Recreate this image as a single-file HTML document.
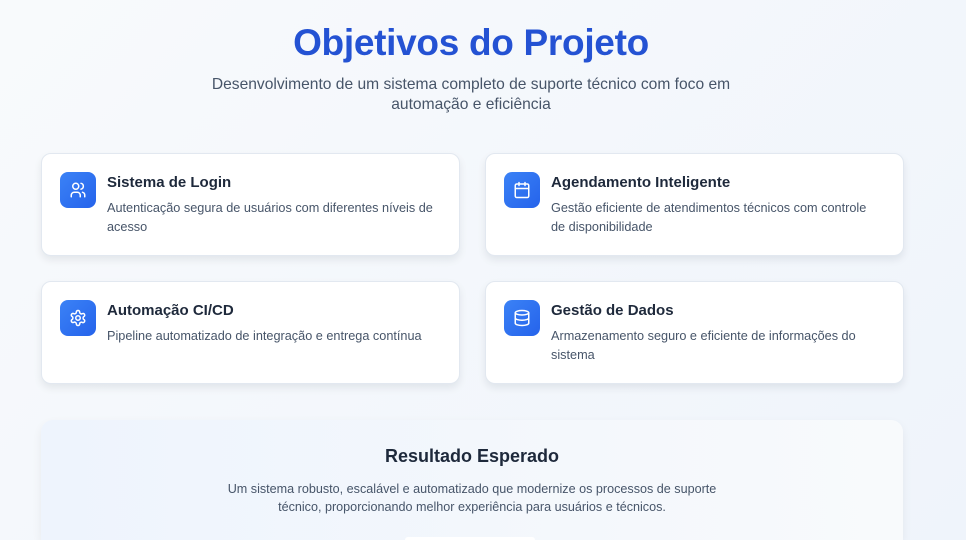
<!DOCTYPE html>
<html style="height:540px;overflow:hidden"><head><meta charset="utf-8"><style>
*{margin:0;padding:0;box-sizing:border-box}
body{width:966px;height:540px;overflow:hidden;background:linear-gradient(135deg,#f8fafc,#eff4fb);font-family:"Liberation Sans",sans-serif;position:relative}
h1{position:absolute;top:22px;left:0;width:942px;text-align:center;font-size:37px;font-weight:700;color:#2452d3;letter-spacing:-0.3px}
.sub{position:absolute;top:75px;left:180px;width:582px;text-align:center;font-size:15.6px;line-height:20px;color:#475569}
.card{position:absolute;width:419px;height:103px;background:#fff;border:1px solid #e2e8f0;border-radius:10px;box-shadow:0 4px 8px rgba(15,23,42,.08)}
.ic{position:absolute;left:18px;top:18px;width:36px;height:36px;border-radius:8px;background:linear-gradient(135deg,#3b82f6,#2563eb);display:flex;align-items:center;justify-content:center}
.t{position:absolute;left:65px;top:20px;font-size:15px;font-weight:700;color:#1e293b}
.d{position:absolute;left:65px;top:45px;width:334px;font-size:12.7px;line-height:19px;color:#475569}
.res{position:absolute;left:41px;top:420px;width:862px;height:120px;border-radius:12px 12px 0 0;background:linear-gradient(90deg,#eef4fd,#f8fafc);box-shadow:0 4px 10px rgba(15,23,42,.06)}
.res h2{position:absolute;top:26px;width:100%;text-align:center;font-size:18px;font-weight:700;color:#1e293b}
.res p{position:absolute;top:60px;left:170px;width:522px;text-align:center;font-size:12.6px;line-height:18px;color:#475569}
.pill{position:absolute;left:405px;top:537px;width:130px;height:3px;background:#fff;border-radius:6px 6px 0 0}
</style></head><body>
<h1>Objetivos do Projeto</h1>
<div class="sub">Desenvolvimento de um sistema completo de suporte técnico com foco em automação e eficiência</div>

<div class="card" style="left:41px;top:153px"><div class="ic"><svg width="18" height="18" viewBox="0 0 24 24" fill="none" stroke="#fff" stroke-width="2" stroke-linecap="round"><circle cx="9" cy="7" r="4"/><path d="M3 21v-2a4 4 0 0 1 4-4h4a4 4 0 0 1 4 4v2M16 3.1a4 4 0 0 1 0 7.8M21 21v-2a4 4 0 0 0-3-3.9"/></svg></div><div class="t">Sistema de Login</div><div class="d">Autenticação segura de usuários com diferentes níveis de acesso</div></div>

<div class="card" style="left:485px;top:153px"><div class="ic"><svg width="18" height="18" viewBox="0 0 24 24" fill="none" stroke="#fff" stroke-width="2" stroke-linecap="round"><rect x="3" y="4" width="18" height="18" rx="2"/><path d="M16 2v4M8 2v4M3 10h18"/></svg></div><div class="t">Agendamento Inteligente</div><div class="d" style="width:320px">Gestão eficiente de atendimentos técnicos com controle de disponibilidade</div></div>

<div class="card" style="left:41px;top:281px"><div class="ic"><svg width="18" height="18" viewBox="0 0 24 24" fill="none" stroke="#fff" stroke-width="2" stroke-linecap="round" stroke-linejoin="round"><path d="M12.2 2h-.4a2 2 0 0 0-2 2v.2a2 2 0 0 1-1 1.7l-.4.3a2 2 0 0 1-2 0l-.2-.1a2 2 0 0 0-2.7.7l-.2.4a2 2 0 0 0 .7 2.7l.2.1a2 2 0 0 1 1 1.7v.5a2 2 0 0 1-1 1.7l-.2.1a2 2 0 0 0-.7 2.7l.2.4a2 2 0 0 0 2.7.7l.2-.1a2 2 0 0 1 2 0l.4.3a2 2 0 0 1 1 1.7V20a2 2 0 0 0 2 2h.4a2 2 0 0 0 2-2v-.2a2 2 0 0 1 1-1.7l.4-.3a2 2 0 0 1 2 0l.2.1a2 2 0 0 0 2.7-.7l.2-.4a2 2 0 0 0-.7-2.7l-.2-.1a2 2 0 0 1-1-1.7v-.5a2 2 0 0 1 1-1.7l.2-.1a2 2 0 0 0 .7-2.7l-.2-.4a2 2 0 0 0-2.7-.7l-.2.1a2 2 0 0 1-2 0l-.4-.3a2 2 0 0 1-1-1.7V4a2 2 0 0 0-2-2z"/><circle cx="12" cy="12" r="3"/></svg></div><div class="t">Automação CI/CD</div><div class="d">Pipeline automatizado de integração e entrega contínua</div></div>

<div class="card" style="left:485px;top:281px"><div class="ic"><svg width="18" height="18" viewBox="0 0 24 24" fill="none" stroke="#fff" stroke-width="2"><ellipse cx="12" cy="5" rx="9" ry="3"/><path d="M3 5v14a9 3 0 0 0 18 0V5M3 12a9 3 0 0 0 18 0"/></svg></div><div class="t">Gestão de Dados</div><div class="d">Armazenamento seguro e eficiente de informações do sistema</div></div>

<div class="res"><h2>Resultado Esperado</h2><p>Um sistema robusto, escalável e automatizado que modernize os processos de suporte técnico, proporcionando melhor experiência para usuários e técnicos.</p></div>
<div class="pill"></div>
</body></html>
